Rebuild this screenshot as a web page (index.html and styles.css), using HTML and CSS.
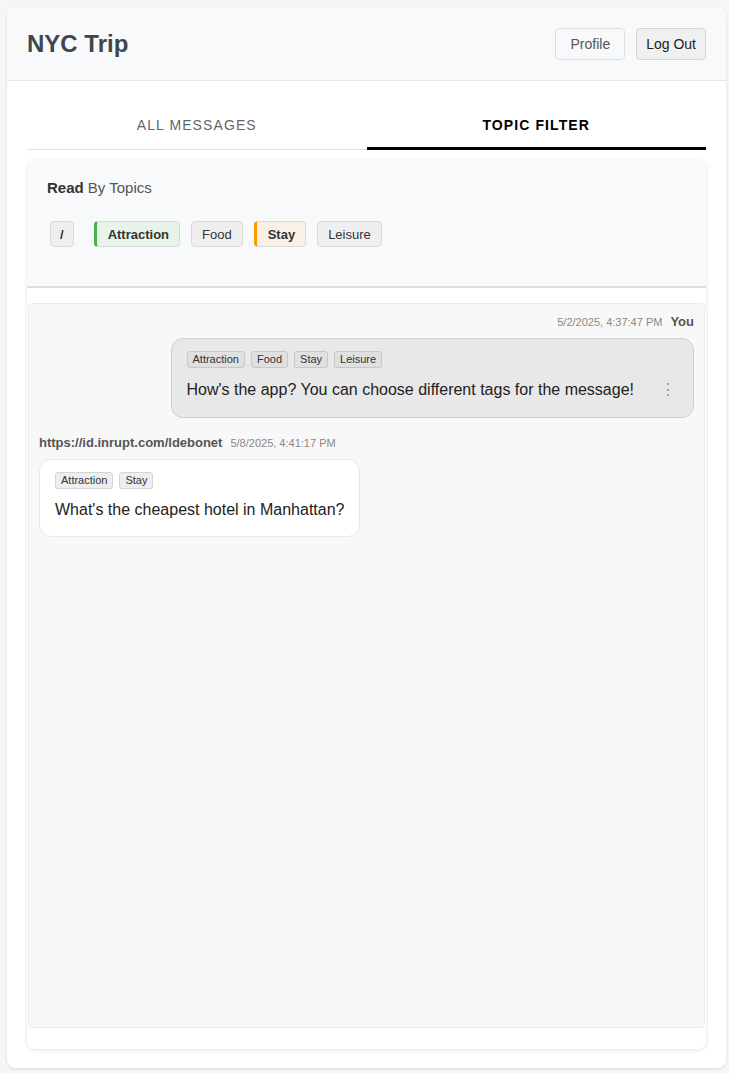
FILE: index.html
```html
<!DOCTYPE html>
<html lang="en">
<head>
<meta charset="utf-8">
<title>NYC Trip</title>
<link rel="stylesheet" href="styles.css">
</head>
<body>
<div class="app">
  <header class="header">
    <h1 class="title">NYC Trip</h1>
    <div class="actions">
      <button class="btn btn-profile">Profile</button>
      <button class="btn btn-logout">Log Out</button>
    </div>
  </header>
  <main class="main">
    <nav class="tabs">
      <div class="tab">ALL MESSAGES</div>
      <div class="tab active">TOPIC FILTER</div>
    </nav>
    <section class="card">
      <div class="topics">
        <div class="topics-title"><strong>Read</strong> By Topics</div>
        <div class="chips">
          <span class="chip chip-all">/</span>
          <span class="chip sel-green">Attraction</span>
          <span class="chip">Food</span>
          <span class="chip sel-orange">Stay</span>
          <span class="chip">Leisure</span>
        </div>
      </div>
      <div class="messages">
        <div class="msg mine">
          <div class="meta"><span class="time">5/2/2025, 4:37:47 PM</span><span class="author">You</span></div>
          <div class="bubble bubble-mine">
            <div class="tags"><span class="tag">Attraction</span><span class="tag">Food</span><span class="tag">Stay</span><span class="tag">Leisure</span></div>
            <div class="body-row">
              <span class="text">How's the app? You can choose different tags for the message!</span>
              <span class="kebab">⋮</span>
            </div>
          </div>
        </div>
        <div class="msg theirs">
          <div class="meta"><span class="author">https://id.inrupt.com/ldebonet</span><span class="time">5/8/2025, 4:41:17 PM</span></div>
          <div class="bubble bubble-theirs">
            <div class="tags"><span class="tag">Attraction</span><span class="tag">Stay</span></div>
            <div class="body-row">
              <span class="text">What's the cheapest hotel in Manhattan?</span>
            </div>
          </div>
        </div>
      </div>
    </section>
  </main>
</div>
</body>
</html>
```
FILE: styles.css
```css
* { box-sizing: border-box; }
html, body { margin: 0; }
body {
  background: #f6f6f6;
  font-family: "Liberation Sans", Arial, Helvetica, sans-serif;
  padding: 8px 3px 5px 7px;
  color: #222;
}
.app {
  background: #fff;
  border-radius: 8px;
  box-shadow: 0 1px 3px rgba(0,0,0,0.12);
  height: 1060px;
  display: flex;
  flex-direction: column;
  overflow: hidden;
}
.header {
  background: #f8f9fa;
  border-bottom: 1px solid #e4e6e8;
  padding: 20px 20px;
  display: flex;
  align-items: center;
  justify-content: space-between;
  height: 73px;
}
.title {
  margin: 0;
  font-size: 24px;
  font-weight: bold;
  color: #41464c;
}
.actions { display: flex; gap: 11px; }
.btn {
  font-family: inherit;
  font-size: 14px;
  height: 32px;
  border-radius: 4px;
  cursor: pointer;
  white-space: nowrap;
}
.btn-profile {
  background: #f8f9fa;
  border: 1px solid #dcdfe2;
  color: #555;
  padding: 0 14px;
}
.btn-logout {
  background: #f0f0f0;
  border: 1px solid #d6d6d6;
  color: #222;
  padding: 0 9px;
}
.main {
  flex: 1;
  padding: 20px 20px 19px;
  display: flex;
  flex-direction: column;
}
.tabs {
  display: flex;
  border-bottom: 1px solid #e2e2e2;
}
.tab {
  flex: 1;
  text-align: center;
  font-size: 14px;
  letter-spacing: 1.1px;
  color: #666;
  padding: 16px 0 13px;
  line-height: 17px;
  border-bottom: 3px solid transparent;
  margin-bottom: -1px;
}
.tab.active {
  color: #000;
  font-weight: bold;
  border-bottom-color: #000;
}
.card {
  margin-top: 10px;
  flex: 1;
  background: #fff;
  border-radius: 8px;
  box-shadow: 0 1px 4px rgba(0,0,0,0.12);
  display: flex;
  flex-direction: column;
  padding-bottom: 21px;
  overflow: hidden;
}
.topics {
  background: #f8f9fa;
  border-bottom: 2px solid #dcdcdc;
  padding: 19px 20px 39px;
  height: 128px;
}
.topics-title {
  font-size: 15px;
  color: #555;
  line-height: 17px;
}
.topics-title strong { color: #333; }
.chips {
  display: flex;
  gap: 11px;
  margin-top: 25px;
}
.chip {
  display: inline-flex;
  align-items: center;
  height: 26px;
  padding: 0 10px;
  font-size: 13px;
  color: #333;
  background: #efefef;
  border: 1px solid #dadada;
  border-radius: 4px;
}
.chip-all {
  font-weight: bold;
  margin-left: 3px;
  margin-right: 9px;
  padding: 0 9px;
}
.sel-green {
  background: #e8f3ea;
  border-left: 3px solid #4caf50;
  font-weight: bold;
  padding-left: 11px;
}
.sel-orange {
  background: #fbf0e5;
  border-left: 3px solid #ff9800;
  font-weight: bold;
  padding-left: 11px;
}
.messages {
  flex: 1;
  margin: 15px 1px 0;
  background: #f8f8f8;
  border: 1px solid #ececec;
  border-radius: 4px;
  padding: 9px 10px 10px;
  display: flex;
  flex-direction: column;
  gap: 16px;
}
.msg { display: flex; flex-direction: column; }
.mine { align-items: flex-end; }
.theirs { align-items: flex-start; }
.meta {
  display: flex;
  align-items: baseline;
  gap: 8px;
  margin-bottom: 7px;
  line-height: 17px;
}
.time { font-size: 11px; color: #888; }
.author { font-size: 13px; font-weight: bold; color: #555; }
.bubble {
  max-width: 84%;
  border-radius: 12px;
  padding: 12px 15px 15px;
}
.bubble-mine { background: #e8e8e8; border: 1px solid #cfcfcf; }
.bubble-theirs { background: #fff; border: 1px solid #e8e8e8; }
.tags { display: flex; gap: 6px; margin-bottom: 10px; }
.tag {
  font-size: 11px;
  line-height: 15px;
  padding: 0 5px;
  background: #e0e0e0;
  border: 1px solid #c8c8c8;
  border-radius: 3px;
  color: #333;
}
.bubble-theirs .tag { background: #eee; border-color: #d5d5d5; }
.body-row {
  display: flex;
  align-items: center;
  font-size: 16px;
  line-height: 22px;
  color: #222;
}
.mine .body-row { min-height: 24px; }
.kebab {
  width: 20px;
  margin-left: 24px;
  text-align: center;
  color: #999;
  font-size: 16px;
}
```
